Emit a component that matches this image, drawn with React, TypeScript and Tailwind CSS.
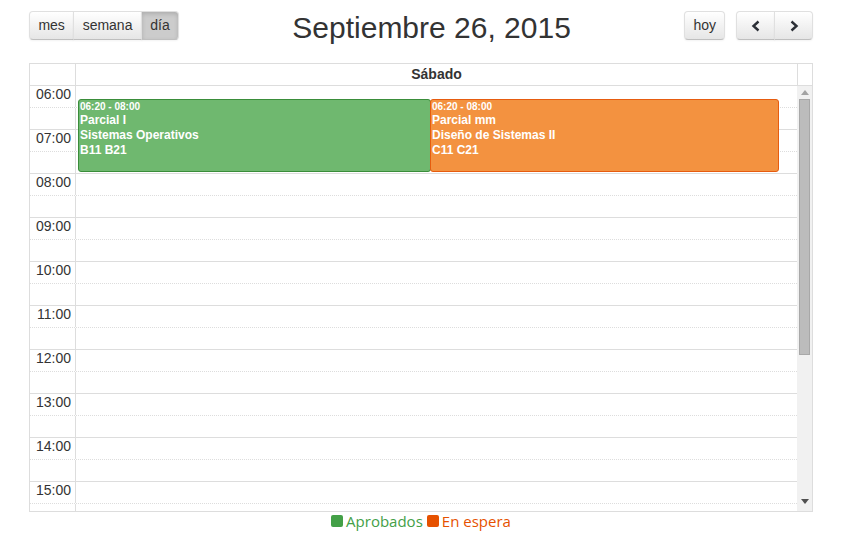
import React from 'react';

type Ev = {
  time: string;
  lines: string[];
  left: string;
  width: string;
  tone: 'green' | 'orange';
};

const events: Ev[] = [
  { time: '06:20 - 08:00', lines: ['Parcial I', 'Sistemas Operativos', 'B11 B21'], left: 'left-[2px]', width: 'w-[353px]', tone: 'green' },
  { time: '06:20 - 08:00', lines: ['Parcial mm', 'Diseño de Sistemas II', 'C11 C21'], left: 'left-[354px]', width: 'w-[349px]', tone: 'orange' },
];

const hours = ['06', '07', '08', '09', '10', '11', '12', '13', '14', '15'];

const Btn = ({ children, active, pos }: { children: React.ReactNode; active?: boolean; pos: 'first' | 'mid' | 'last' | 'solo' }) => {
  const radius =
    pos === 'solo' ? 'rounded-[4px]' : pos === 'first' ? 'rounded-l-[4px]' : pos === 'last' ? 'rounded-r-[4px] -ml-px' : '-ml-px';
  const look = active
    ? 'bg-[#cccccc] shadow-[inset_0_2px_4px_rgba(0,0,0,0.15),0_1px_2px_rgba(0,0,0,0.05)]'
    : 'bg-linear-to-b from-white to-[#e6e6e6] shadow-[inset_0_1px_0_rgba(255,255,255,0.2),0_1px_2px_rgba(0,0,0,0.05)]';
  return (
    <div
      className={`h-[29px] px-[8.4px] flex items-center justify-center border border-[#e0e0e0] border-b-[#bfbfbf] text-[14px] text-[#333] ${radius} ${look}`}
    >
      {children}
    </div>
  );
};

const Chevron = ({ dir }: { dir: 'l' | 'r' }) => (
  <svg width="20" height="12" viewBox="0 0 20 12">
    <polyline
      points={dir === 'l' ? '12.5,1.5 7.5,6 12.5,10.5' : '7.5,1.5 12.5,6 7.5,10.5'}
      fill="none"
      stroke="#2b2f36"
      strokeWidth="2.4"
    />
  </svg>
);

export default function App() {
  return (
    <div className="w-[842px] h-[537px] bg-white px-[29px] pt-[11px] font-['Liberation_Sans',Arial,sans-serif] text-[#333]">
      {/* toolbar */}
      <div className="flex items-center justify-between h-[29px]">
        <div className="flex">
          <Btn pos="first">mes</Btn>
          <Btn pos="mid">semana</Btn>
          <Btn pos="last" active>día</Btn>
        </div>
        <h2 className="text-[30px] leading-none text-[#333] mt-[5px]">Septiembre 26, 2015</h2>
        <div className="flex gap-[11px]">
          <Btn pos="solo">hoy</Btn>
          <div className="flex">
            <Btn pos="first">
              <Chevron dir="l" />
            </Btn>
            <Btn pos="last">
              <Chevron dir="r" />
            </Btn>
          </div>
        </div>
      </div>

      {/* calendar */}
      <div className="mt-[23px] w-[784px] border border-[#ddd]">
        <div className="flex h-[22px] border-b border-[#ddd]">
          <div className="w-[46px] border-r border-[#ddd]" />
          <div className="w-[722px] border-r border-[#ddd] flex items-center justify-center text-[14px] font-bold">
            Sábado
          </div>
          <div className="flex-1" />
        </div>
        <div className="flex h-[425px] overflow-hidden">
          <div className="relative w-[767px]">
            {hours.map((h) => (
              <React.Fragment key={h}>
                <div className="flex h-[22px] border-b border-dotted border-[#ddd]">
                  <div className="w-[46px] border-r border-solid border-[#ddd] text-right pr-[4px] text-[14px] leading-[17px]">
                    {h}:00
                  </div>
                </div>
                <div className="flex h-[22px] border-b border-[#ddd]">
                  <div className="w-[46px] border-r border-[#ddd]" />
                </div>
              </React.Fragment>
            ))}
            <div className="absolute top-0 bottom-0 left-[46px] right-0">
              {events.map((e, i) => (
                <div
                  key={i}
                  className={`absolute top-[13px] h-[73px] ${e.left} ${e.width} rounded-[3px] border px-px pt-px text-white font-bold overflow-hidden ${
                    e.tone === 'green' ? 'bg-[#6fb86f] border-[#3a8d3a]' : 'bg-[#f39240] border-[#e65c0f]'
                  }`}
                >
                  <div className="text-[10px] leading-[12px]">{e.time}</div>
                  {e.lines.map((l) => (
                    <div key={l} className="text-[12px] leading-[15px]">
                      {l}
                    </div>
                  ))}
                </div>
              ))}
            </div>
          </div>
          {/* scrollbar */}
          <div className="flex-1 bg-[#f1f1f1] flex flex-col items-center">
            <div className="h-[13px] flex items-center justify-center">
              <svg width="8" height="5" viewBox="0 0 8 5">
                <polygon points="0,5 8,5 4,0" fill="#a3a3a3" />
              </svg>
            </div>
            <div className="w-[11px] h-[256px] bg-[#bcbcbc] border border-[#a8a8a8]" />
            <div className="flex-1" />
            <div className="h-[16px] flex items-center justify-center pb-[3px]">
              <svg width="8" height="5" viewBox="0 0 8 5">
                <polygon points="0,0 8,0 4,5" fill="#505050" />
              </svg>
            </div>
          </div>
        </div>
      </div>

      {/* legend */}
      <div className="flex items-center justify-center gap-[3px] font-['Open_Sans',sans-serif] font-medium text-[15px] leading-[18px]">
        <span className="w-[12px] h-[12px] rounded-[2px] bg-[#43a047]" />
        <span className="text-[#43a047]">Aprobados</span>
        <span className="ml-[1px] w-[12px] h-[12px] rounded-[2px] bg-[#e65100]" />
        <span className="text-[#e65100]">En espera</span>
      </div>
    </div>
  );
}
